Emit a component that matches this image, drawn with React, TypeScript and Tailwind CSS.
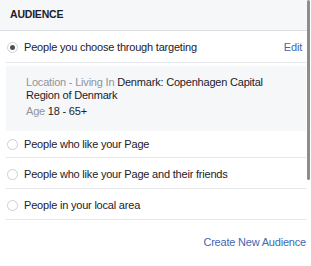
import React from 'react';

const font = { fontFamily: '"Liberation Sans", Arial, sans-serif' };

function Radio({ checked }: { checked?: boolean }) {
  return (
    <span className="flex h-[11px] w-[11px] shrink-0 items-center justify-center rounded-full border border-[#ccd0d5] bg-white">
      {checked && <span className="h-[5px] w-[5px] rounded-full bg-[#4b4f56]" />}
    </span>
  );
}

function Option({ label }: { label: string }) {
  return (
    <div className="flex h-[31px] items-center gap-[6px] border-b border-[#e5e7ea] px-px pt-[2px]">
      <Radio />
      <span className="text-[11px] tracking-[-0.2px] text-[#1d2129]">{label}</span>
    </div>
  );
}

export default function App() {
  return (
    <div className="relative h-[266px] w-[311px] overflow-hidden bg-white" style={font}>
      <div className="mr-[4px] flex h-[31px] items-center border-b border-[#dddfe2] bg-[#f6f7f9] px-[10px]">
        <span className="text-[10.5px] font-bold tracking-[-0.2px] text-[#1d2129]">AUDIENCE</span>
      </div>

      <div className="pl-[6px] pr-[5px]">
        <div className="flex h-[32px] items-center gap-[6px] border-b border-[#e5e7ea] px-px pt-[2px]">
          <Radio checked />
          <span className="text-[11px] tracking-[-0.2px] text-[#1d2129]">People you choose through targeting</span>
          <span className="ml-auto pr-[3px] text-[11px] tracking-[-0.2px] text-[#4267b2]">Edit</span>
        </div>

        <div className="mt-[3px] bg-[#f6f7f9] px-[20px] pb-[13px] pt-[10px] text-[11px] leading-[13px] tracking-[-0.2px] text-[#1d2129]">
          <p>
            <span className="text-[#90949c]">Location - Living In </span>
            Denmark: Copenhagen Capital Region of Denmark
          </p>
          <p className="mt-[3px]">
            <span className="text-[#90949c]">Age </span>18 - 65+
          </p>
        </div>

        <div className="flex h-[27px] items-center gap-[6px] border-b border-[#e5e7ea] px-px">
          <Radio />
          <span className="text-[11px] tracking-[-0.2px] text-[#1d2129]">People who like your Page</span>
        </div>
        <Option label="People who like your Page and their friends" />
        <Option label="People in your local area" />

        <div className="flex justify-end pt-[14px]">
          <span className="text-[11px] tracking-[-0.2px] text-[#4267b2]">Create New Audience</span>
        </div>
      </div>

      <div className="absolute right-[1px] top-0 h-[180px] w-[3px] rounded-full bg-[#8d8d8d]" />
    </div>
  );
}
